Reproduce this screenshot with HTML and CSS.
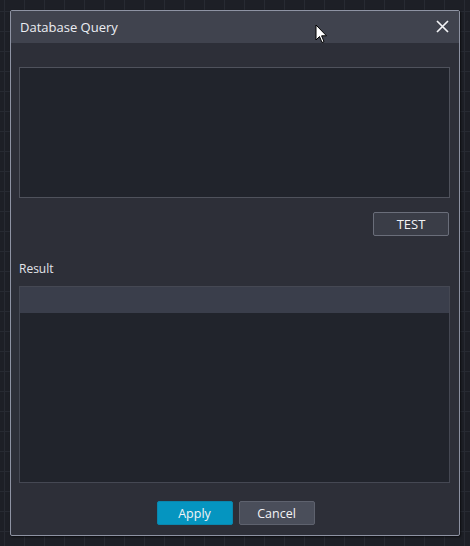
FILE: index.html
```html
<!DOCTYPE html>
<html lang="en">
<head>
    <meta charset="UTF-8">
    <meta name="viewport" content="width=device-width, initial-scale=1.0">
    <title>Database Query</title>
    <link rel="stylesheet" href="styles.css">
</head>
<body>
    <div class="dialog">
        <div class="dialog-header">
            <span class="dialog-title">Database Query</span>
            <button class="close-btn" title="Close">
                <svg width="13" height="13" viewBox="0 0 13 13">
                    <path d="M1,1 L12,12 M12,1 L1,12"></path>
                </svg>
            </button>
        </div>
        <div class="dialog-body">
            <textarea class="query" spellcheck="false"></textarea>
            <div class="test-row">
                <button class="btn btn-test">TEST</button>
            </div>
            <div class="label">Result</div>
            <div class="result">
                <div class="result-head"></div>
                <div class="result-rows"></div>
            </div>
            <div class="actions">
                <button class="btn btn-apply">Apply</button>
                <button class="btn btn-cancel">Cancel</button>
            </div>
        </div>
    </div>
    <!-- mouse pointer from the capture -->
    <svg class="pointer" width="13" height="21" viewBox="0 0 13 21">
        <path d="M1,1 L1,16 L4.5,12.5 L7,18.5 L9,17.6 L6.6,11.8 L11.5,11.8 Z"></path>
    </svg>
</body>
</html>
```

FILE: styles.css
```css
html, body {
    margin: 0;
    height: 100%;
}
body {
    background-color: #1d1f26;
    background-image:
        linear-gradient(#272a32 1px, transparent 1px),
        linear-gradient(90deg, #272a32 1px, transparent 1px);
    background-size: 20px 20px;
    background-position: 4px 11px;
    font-family: "Open Sans", "Noto Sans", sans-serif;
    color: #e6e8ee;
    padding: 10px;
    box-sizing: border-box;
}
.dialog {
    width: 450px;
    height: 526px;
    box-sizing: border-box;
    border: 1px solid #8e93a3;
    border-radius: 2px;
    background: #2d2f38;
    display: flex;
    flex-direction: column;
    box-shadow: 1px 1px 2px rgba(0,0,0,0.6);
}
.dialog-header {
    height: 32px;
    background: #40434e;
    display: flex;
    align-items: center;
    justify-content: space-between;
    padding: 0 9px 0 9px;
}
.dialog-title {
    font-size: 13px;
    color: #eceef3;
    margin-top: -1px;
}
.close-btn {
    border: none;
    background: none;
    padding: 0;
    width: 14px;
    height: 14px;
    display: flex;
    cursor: pointer;
}
.close-btn svg {
    stroke: #f2f3f6;
    stroke-width: 1.7;
    fill: none;
}
.dialog-body {
    flex: 1;
    display: flex;
    flex-direction: column;
    padding: 24px 9px 0 8px;
}
.query {
    display: block;
    height: 131px;
    box-sizing: border-box;
    margin: 0;
    resize: none;
    border: 1px solid #4f525c;
    background: #21242c;
    outline: none;
    color: #e6e8ee;
}
.test-row {
    display: flex;
    justify-content: flex-end;
    margin-top: 14px;
    padding-right: 1px;
}
.btn {
    width: 76px;
    height: 24px;
    box-sizing: border-box;
    border-radius: 2px;
    font-family: "Open Sans", "Noto Sans", sans-serif;
    font-size: 12.5px;
    color: #f2f3f6;
    padding: 0;
    cursor: pointer;
}
.btn-test {
    background: #3a3d47;
    border: 1px solid #6a6e7a;
    font-size: 13px;
}
.label {
    font-size: 12px;
    margin-top: 24px;
    height: 18px;
    line-height: 18px;
    color: #e3e5ea;
}
.result {
    margin-top: 8px;
    height: 197px;
    box-sizing: border-box;
    border: 1px solid #454853;
    background: #21242c;
    display: flex;
    flex-direction: column;
}
.result-head {
    height: 26px;
    background: #3a3e4b;
}
.actions {
    display: flex;
    justify-content: center;
    gap: 6px;
    margin-top: 18px;
    padding-left: 2px;
}
.btn-apply {
    background: #0595c0;
    border: 1px solid #0a86ad;
}
.btn-cancel {
    background: #4a4e5a;
    border: 1px solid #5e626e;
}
.pointer {
    position: absolute;
    left: 315px;
    top: 24px;
}
.pointer path {
    fill: #ffffff;
    stroke: #000000;
    stroke-width: 1;
    stroke-linejoin: miter;
}
```
